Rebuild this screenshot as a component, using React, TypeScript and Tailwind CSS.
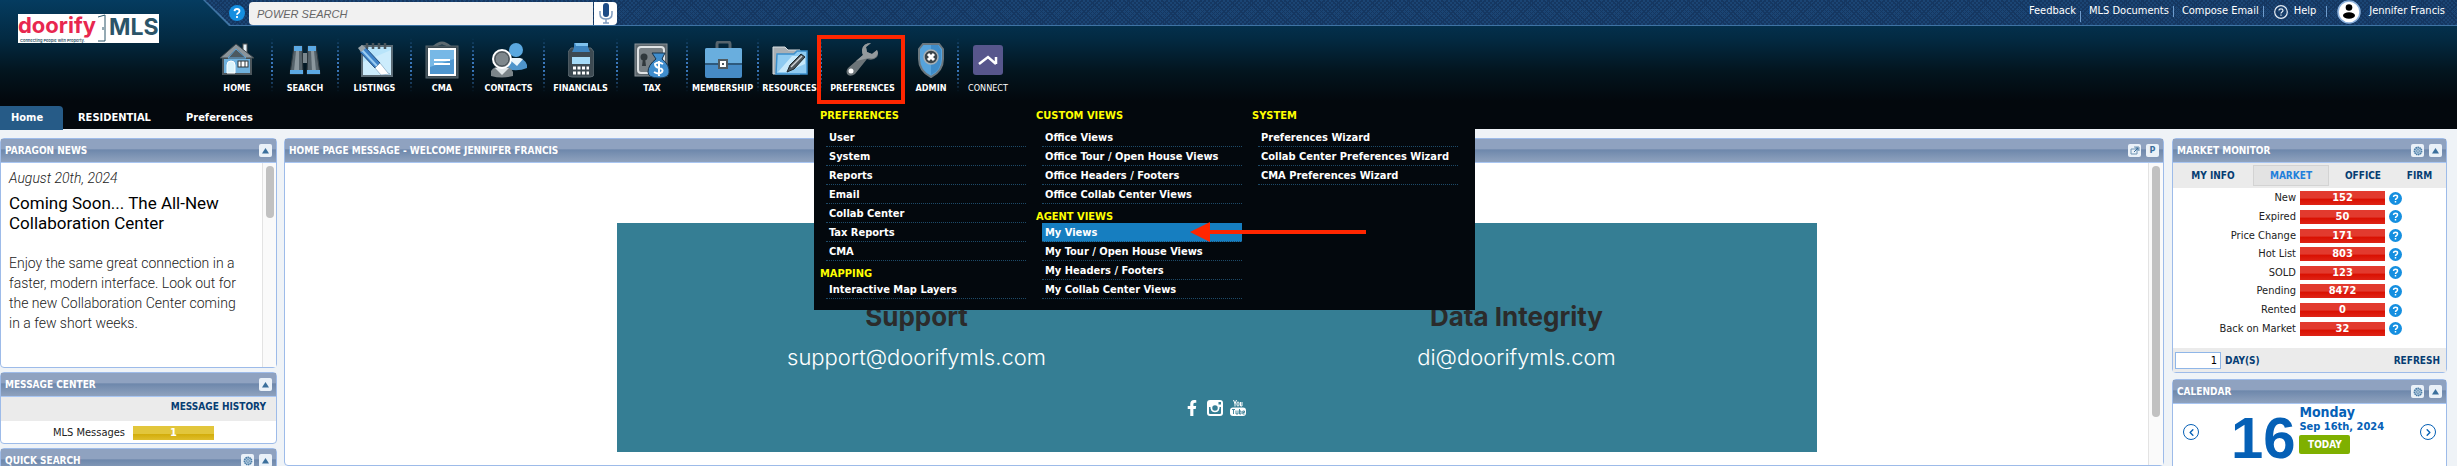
import React, { useState } from 'react';
import { ChevronLeft, ChevronRight } from 'lucide-react';
import { FaFacebookF } from 'react-icons/fa';

const HomeIcon = () => (
  <svg width="36" height="36" viewBox="0 0 36 36">
    <rect x="24" y="2" width="4" height="9" fill="#e8f4fb" stroke="#555" />
    <path d="M4 16H32V32H4Z" fill="#6fb1dd" stroke="#4c565c" strokeWidth="2" />
    <path d="M1 16L17 2L35 16H27L17 7L9 16Z" fill="#8b959b" stroke="#3f484d" />
    <path d="M9 16L17 7L27 16Z" fill="#4c5960" stroke="#62a9dc" />
    <path d="M8 31V23a4 4 0 0 1 8 0V31Z" fill="#d9f3fc" stroke="#fff" />
    <rect x="19" y="19" width="10" height="6" fill="#fff" stroke="#2d3439" />
    <path d="M22 19V25M26 19V25" stroke="#2d3439" />
  </svg>
);

const SearchIcon = () => (
  <svg width="36" height="36" viewBox="0 0 36 36">
    <path d="M7 4H15L16 32H3Z" fill="#56636b" stroke="#2e383e" />
    <path d="M21 4H29L33 32H20Z" fill="#56636b" stroke="#2e383e" />
    <path d="M9 9H12V29H7Z" fill="#8b979e" />
    <path d="M24 9H27L29 29H25Z" fill="#8b979e" />
    <rect x="16" y="11" width="4" height="10" fill="#7b878e" />
    <path d="M7 4H15V9H7ZM21 4H29V9H21ZM3 28H16V32H3ZM20 28H33V32H20Z" fill="#5ba9e4" />
  </svg>
);

const ListingsIcon = () => (
  <svg width="36" height="36" viewBox="0 0 36 36">
    <rect x="5" y="4" width="30" height="30" fill="#b8e4fa" stroke="#5c6c76" strokeWidth="2" />
    <path d="M6 20L34 8V33H6Z" fill="#d8f2fd" opacity=".6" />
    <path d="M10 1V7M16 1V7M22 1V7M28 1V7" stroke="#4a555b" strokeWidth="2.5" />
    <path d="M3 10L8 5L23 21L18 26Z" fill="#3e83c8" stroke="#224a78" />
    <path d="M5 8L20 24" stroke="#9bcdf2" strokeWidth="2" />
    <path d="M1 6L5 3L9 6L4 10Z" fill="#99a3a8" />
    <path d="M18 26L23 21L31 31L33 32L24 33Z" fill="#fff" stroke="#5c87a8" strokeWidth=".5" />
  </svg>
);

const CmaIcon = () => (
  <svg width="36" height="38" viewBox="0 0 36 38">
    <path d="M10 6Q18 -2 26 6" fill="none" stroke="#5d6a71" strokeWidth="3" />
    <rect x="2" y="5" width="32" height="32" fill="#3c4a52" stroke="#56646c" />
    <rect x="5" y="8" width="26" height="26" fill="#4f96cf" stroke="#fff" strokeWidth="2" />
    <path d="M6 9H30V18L6 26Z" fill="#77b8e6" />
    <path d="M10 19H26M10 23H26" stroke="#fff" strokeWidth="2" />
  </svg>
);

const ContactsIcon = () => (
  <svg width="38" height="38" viewBox="0 0 38 38">
    <circle cx="26" cy="9" r="7" fill="#5aa8e0" />
    <path d="M16 28V22Q18 17 26 17Q35 17 37 24V27Q28 31 16 28Z" fill="#4e94cb" />
    <path d="M20 19L27 25L33 18L30 17H22Z" fill="#eaf5fc" />
    <path d="M1 35V30Q4 25 12 25Q21 25 23 31V35Q12 38 1 35Z" fill="#7c858a" />
    <path d="M5 27L12 34L19 27Z" fill="#dfe5e8" />
    <circle cx="12" cy="18" r="9" fill="#6c767c" stroke="#fff" strokeWidth="2" />
    <circle cx="12" cy="18" r="7" fill="#7e878c" stroke="#444d52" />
  </svg>
);

const FinancialsIcon = () => (
  <svg width="26" height="36" viewBox="0 0 26 36">
    <path d="M3 6H23L26 10V32Q26 35 22 35H4Q0 35 0 32V10Z" fill="#3d4a52" stroke="#5b6870" />
    <path d="M6 1H20V5L22 10H4L6 6Z" fill="#3e85bf" />
    <path d="M7 1H20V4H8Z" fill="#7ec2ee" />
    <rect x="4" y="15" width="18" height="7" fill="#a5dbf8" />
    <path d="M5 26H21M5 31H21" stroke="#fff" strokeWidth="3" strokeDasharray="3 1.5" />
  </svg>
);

const TaxIcon = () => (
  <svg width="36" height="38" viewBox="0 0 36 38">
    <rect x="1" y="3" width="32" height="32" fill="#5c666c" stroke="#899298" />
    <rect x="4" y="6" width="26" height="26" rx="3" fill="#777f84" stroke="#dfe3e5" strokeWidth="2" />
    <circle cx="10" cy="16" r="3.5" fill="#30383c" />
    <path d="M9 17H11L12 25H8Z" fill="#30383c" />
    <path d="M18 12H31L28 18Q36 24 35 32Q34 37 25 37Q14 37 14 31Q14 24 22 18Z" fill="#3f8dcd" stroke="#16324a" />
    <path d="M29 23Q24 20 21 23Q21 26 25 27Q30 28 28 31Q25 34 20 31M25 20V35" fill="none" stroke="#fff" strokeWidth="2" />
  </svg>
);

const MembershipIcon = () => (
  <svg width="38" height="38" viewBox="0 0 38 38">
    <path d="M13 8V3Q13 1 15 1H24Q26 1 26 3V8" fill="none" stroke="#56646d" strokeWidth="3" />
    <rect x="1" y="7" width="37" height="30" rx="2" fill="#468bc6" />
    <path d="M1 9Q1 7 3 7H36Q38 7 38 9V23H1Z" fill="#69aede" />
    <path d="M1 23H38" stroke="#2d597d" strokeWidth="2" />
    <rect x="15" y="19" width="8" height="8" fill="#fff" stroke="#4f5a61" strokeWidth="2" />
    <rect x="18" y="22" width="2" height="2" fill="#4f5a61" />
  </svg>
);

const ResourcesIcon = () => (
  <svg width="36" height="32" viewBox="0 0 36 32">
    <path d="M1 3H13L16 6H28V30H1Z" fill="#a9b0b5" stroke="#dadfe2" />
    <path d="M5 10H22L25 7H35V30H4Z" fill="#8fcbf1" stroke="#3b8fcb" strokeWidth="1.5" />
    <path d="M6 28L20 12H33V20L14 28Z" fill="#c7e9fb" />
    <path d="M15 28L18 21L29 10L33 13L22 25Z" fill="#4c555a" stroke="#1f2629" />
    <path d="M19 23L30 12" stroke="#cfd4d7" strokeWidth="1.5" />
  </svg>
);

const WrenchIcon = () => (
  <svg width="36" height="34" viewBox="0 0 36 34">
    <path
      d="M32 7L27 11L22 9L21 4L26 0Q18 0 17 7Q17 10 18 12L3 25Q0 29 3 32Q6 34 10 31L22 16Q28 18 32 14Q34 11 32 7Z"
      fill="#6c7478"
    />
    <path d="M26 0Q18 0 17 7Q17 10 18 12L11 18L24 15Q31 17 33 10L32 7L27 11L22 9L21 4Z" fill="#949a9d" />
    <circle cx="6" cy="28" r="2.5" fill="#fff" />
  </svg>
);

const AdminIcon = () => (
  <svg width="26" height="36" viewBox="0 0 26 36">
    <path d="M5 2H21L25 7V17Q25 29 13 35Q1 29 1 17V7Z" fill="#56a3dc" stroke="#6b777e" strokeWidth="2" />
    <path d="M13 3H20L23 8V17Q23 28 13 33Z" fill="#3f8cc9" />
    <circle cx="13" cy="15" r="7" fill="#3a444a" stroke="#a7b0b5" strokeWidth="1.5" />
    <path d="M10 12L16 18M16 12L10 18" stroke="#fff" strokeWidth="3" />
  </svg>
);

const ConnectIcon = () => (
  <svg width="30" height="30" viewBox="0 0 30 30">
    <rect width="30" height="30" rx="3" fill="#57568c" />
    <path d="M6 19L15 12L23 19M23 19V12" fill="none" stroke="#fff" strokeWidth="2.5" />
  </svg>
);

const navItems = [
  { label: 'HOME', width: 'w-[70px]', icon: <HomeIcon /> },
  { label: 'SEARCH', width: 'w-[66px]', icon: <SearchIcon /> },
  { label: 'LISTINGS', width: 'w-[73px]', icon: <ListingsIcon /> },
  { label: 'CMA', width: 'w-[62px]', icon: <CmaIcon /> },
  { label: 'CONTACTS', width: 'w-[71px]', icon: <ContactsIcon /> },
  { label: 'FINANCIALS', width: 'w-[73px]', icon: <FinancialsIcon /> },
  { label: 'TAX', width: 'w-[70px]', icon: <TaxIcon /> },
  { label: 'MEMBERSHIP', width: 'w-[71px]', icon: <MembershipIcon /> },
  { label: 'RESOURCES', width: 'w-[63px]', icon: <ResourcesIcon /> },
  { label: 'PREFERENCES', width: 'w-[83px]', icon: <WrenchIcon /> },
  { label: 'ADMIN', width: 'w-[54px]', icon: <AdminIcon /> },
  { label: 'CONNECT', width: 'w-[58px]', icon: <ConnectIcon /> },
];

const menuColumns = [
  [
    { title: 'PREFERENCES', items: ['User', 'System', 'Reports', 'Email', 'Collab Center', 'Tax Reports', 'CMA'] },
    { title: 'MAPPING', items: ['Interactive Map Layers'] },
  ],
  [
    {
      title: 'CUSTOM VIEWS',
      items: ['Office Views', 'Office Tour / Open House Views', 'Office Headers / Footers', 'Office Collab Center Views'],
    },
    { title: 'AGENT VIEWS', items: ['My Views', 'My Tour / Open House Views', 'My Headers / Footers', 'My Collab Center Views'] },
  ],
  [{ title: 'SYSTEM', items: ['Preferences Wizard', 'Collab Center Preferences Wizard', 'CMA Preferences Wizard'] }],
];

const marketRows = [
  ['New', '152'],
  ['Expired', '50'],
  ['Price Change', '171'],
  ['Hot List', '803'],
  ['SOLD', '123'],
  ['Pending', '8472'],
  ['Rented', '0'],
  ['Back on Market', '32'],
];

const Logo = () => (
  <svg width="141" height="29" viewBox="0 0 141 29" className="bg-white">
    <text x="0" y="19" fill="#e8274f" fontFamily="Inter" fontWeight="700" fontSize="22">doorify</text>
    <path d="M80 3L87 1V27H80M85 13V16" fill="none" stroke="#2b5468" />
    <text x="91" y="21" fill="#2b5468" fontFamily="Inter" fontWeight="700" fontSize="23">MLS</text>
    <text x="2" y="28" fill="#2b5468" fontFamily="Inter" fontWeight="600" fontSize="4">Connecting People with Property.</text>
  </svg>
);

const HelpDot = ({ big }: { big?: boolean }) => (
  <svg width={big ? 16 : 13} height={big ? 16 : 13} viewBox="0 0 16 16">
    <circle cx="8" cy="8" r="8" fill="#158fe0" />
    <path d="M5.5 6.2Q5.7 4 8 4Q10.5 4 10.5 6Q10.5 7.200 9.200 8Q8 8.700 8 9.800M8 11V13" fill="none" stroke="#fff" strokeWidth="1.8" />
  </svg>
);

const PreferencesMenu = () => (
  <div className="absolute -left-2 top-full z-20 flex h-[206px] w-[661px] bg-[#03080d] pl-[6px] pt-0.5 text-left text-[11px] font-bold text-white">
    {menuColumns.map((column, c) => (
      <div key={c} className="w-[216px]">
        {column.map((group, g) => (
          <div key={group.title}>
            <h3 className={g === 0 ? 'h-[22px] leading-5 text-[#ffff00]' : 'h-[19px] pt-[7px] leading-3 text-[#ffff00]'}>
              {group.title}
            </h3>
            <ul className="ml-[6px] w-[200px]">
              {group.items.map((item) => (
                <li
                  key={item}
                  className={`h-[19px] border-b border-dotted border-[#1d4a68] ${item === 'My Views' ? 'bg-[#167ec0]' : ''}`}
                >
                  <a href="#" className="block pl-[3px] leading-[19px]">{item}</a>
                </li>
              ))}
            </ul>
          </div>
        ))}
      </div>
    ))}
    {/* Pointer to the active entry */}
    <svg width="176" height="20" viewBox="0 0 176 20" className="absolute left-[376px] top-[118px]">
      <path d="M0 10L20 0V8H176V12H20V20Z" fill="#ff2600" />
    </svg>
  </div>
);

const NavBar = () => (
  <nav className="pt-[9px]">
    <ul className="flex">
      {navItems.map((item, i) => (
        <li key={item.label} className={`relative flex h-[69px] shrink-0 ${item.width}`}>
          <a href="#" className="flex min-w-0 flex-1 flex-col items-center pt-[5px] text-[9px] text-white">
            <span className="flex h-[40px] items-center justify-center">{item.icon}</span>
            <span className={`leading-4 ${item.label === 'CONNECT' ? '' : 'font-bold'}`}>{item.label}</span>
          </a>
          {i < navItems.length - 1 && (
            <span className="mt-[3px] h-[54px] w-0.5 bg-[repeating-linear-gradient(to_bottom,#3a78bd_0_2px,transparent_2px_4px)] [mask-image:linear-gradient(transparent,black_40%,black_60%,transparent)]" />
          )}
          {item.label === 'PREFERENCES' && (
            <>
              <span className="absolute -left-[5px] right-0 inset-y-0 z-30 border-4 border-[#ff2600]" />
              <PreferencesMenu />
            </>
          )}
        </li>
      ))}
    </ul>
  </nav>
);

const TopBar = () => (
  <div className="bg-[#3f74a4] pb-px [clip-path:polygon(0_0,100%_0,100%_100%,26px_100%)]">
    <div className="flex h-[25px] items-center bg-[#1b4574] bg-[repeating-linear-gradient(45deg,transparent_0_2px,#153761_2px_3px),repeating-linear-gradient(-45deg,transparent_0_2px,#153761_2px_3px)] pl-[26px] text-[11px] text-white [clip-path:polygon(2px_0,100%_0,100%_100%,28px_100%)]">
      <button type="button" aria-label="Search help"><HelpDot big /></button>
      <input
        type="text"
        aria-label="Power search"
        placeholder="POWER SEARCH"
        className="ml-1 mt-0.5 h-[23px] w-[344px] rounded-l-sm bg-[#f1f1f1] px-2 font-['Liberation_Sans'] text-[11px] italic text-black placeholder-[#666] outline-none"
      />
      <button type="button" aria-label="Voice search" className="ml-px mt-0.5 flex h-[23px] w-[23px] items-center justify-center rounded-r-sm bg-white">
        <svg width="14" height="21" viewBox="0 0 14 21">
          <rect x="4" y="0" width="6" height="14" rx="3" fill="#1d4b86" />
          <path d="M1 8V11Q1 16 7 16Q13 16 13 11V8M7 16V20M4 20H10" fill="none" stroke="#7f9cc0" strokeWidth="1.5" />
        </svg>
      </button>
      <div className="ml-auto flex items-center pr-3 pb-0.5">
        <a href="#">Feedback</a>
        <span className="ml-1 mr-2 mt-2.5 h-[11px] w-px bg-[#6f9ccc]" />
        <a href="#">MLS Documents</a>
        <span className="ml-1 mr-2 h-[11px] w-px bg-[#6f9ccc]" />
        <a href="#">Compose Email</a>
        <span className="ml-1 mr-2.5 h-[11px] w-px bg-[#6f9ccc]" />
        <svg width="14" height="14" viewBox="0 0 14 14">
          <circle cx="7" cy="7" r="6.300" fill="none" stroke="#e5edf5" strokeWidth="1.2" />
          <path d="M5 5.500Q5 3.800 7 3.800Q9 3.800 9 5.400Q9 6.300 8 6.900Q7 7.500 7 8.400M7 9.500V10.700" fill="none" stroke="#e5edf5" strokeWidth="1.2" />
        </svg>
        <a href="#" className="ml-1.5">Help</a>
        <span className="mx-2.5 h-[11px] w-px bg-[#6f9ccc]" />
        <svg width="24" height="24" viewBox="0 0 24 24">
          <circle cx="12" cy="12" r="11" fill="#fff" stroke="#8db2dd" strokeWidth="1.5" />
          <circle cx="12" cy="7.500" r="3.300" fill="#000" />
          <ellipse cx="12" cy="15.500" rx="6" ry="3.300" fill="#000" />
        </svg>
        <a href="#" className="ml-2">Jennifer Francis</a>
      </div>
    </div>
  </div>
);

const Tabs = () => (
  <div className="mt-0.5 flex h-6 text-[11px] font-bold leading-6 text-white">
    <a href="#" className="w-[63px] rounded-tr bg-[#265b87] pl-[11px]">Home</a>
    <a href="#" className="ml-[15px] w-[108px]">RESIDENTIAL</a>
    <a href="#">Preferences</a>
  </div>
);

const iconButton = 'flex h-[13px] w-[13px] items-center justify-center rounded-xs bg-[#eaf1f8] text-[#3a6f9c]';

const ToolButton = ({ kind }: { kind: 'up' | 'gear' | 'window' | 'print' }) => (
  <button type="button" aria-label={kind} className={iconButton}>
    {kind === 'up' && (
      <svg width="7" height="6" viewBox="0 0 7 6"><path d="M0 5.500L3.500 0L7 5.500Z" fill="#3a6f9c" /></svg>
    )}
    {kind === 'gear' && (
      <svg width="10" height="10" viewBox="0 0 10 10">
        <circle cx="5" cy="5" r="3.600" fill="#a9c6dd" stroke="#4a7ba5" strokeWidth="1.600" strokeDasharray="1.500 .5" />
        <circle cx="5" cy="5" r="1.300" fill="#eaf1f8" stroke="#4a7ba5" strokeWidth=".8" />
      </svg>
    )}
    {kind === 'window' && (
      <svg width="10" height="9" viewBox="0 0 10 9">
        <path d="M1 3H7V8H1ZM4 1H9V5" fill="none" stroke="#6e93b2" />
        <path d="M4 6L8 2M5.500 2H8V4.500" fill="none" stroke="#3a6f9c" />
      </svg>
    )}
    {kind === 'print' && <span className="text-[9px] font-bold leading-none">P</span>}
  </button>
);

interface PanelProps {
  title: string;
  tools: ('up' | 'gear' | 'window' | 'print')[];
  className?: string;
  children?: React.ReactNode;
}

const Panel = ({ title, tools, className = '', children }: PanelProps) => (
  <section className={`flex flex-col rounded-sm border border-[#9dbbe9] bg-white ${className}`}>
    <header className="flex h-6 shrink-0 items-center gap-[5px] border-b border-[#a9c6f2] bg-[linear-gradient(#8fa2c0_0_45%,#6d87ab_46%,#8fa2be_100%)] pl-1 pr-1">
      <h2 className="mr-auto text-[10px] font-bold text-white">{title}</h2>
      {tools.map((tool) => <ToolButton key={tool} kind={tool} />)}
    </header>
    {children}
  </section>
);

const LeftColumn = () => (
  <aside className="flex w-[277px] shrink-0 flex-col gap-1">
    <Panel title="PARAGON NEWS" tools={['up']} className="h-[230px] shrink-0">
      <div className="flex min-h-0 flex-1">
        <div className="flex-1 pl-2 pt-[5px] font-['Roboto'] text-[14px] font-light text-[#222]">
          <p className="italic leading-5">August 20th, 2024</p>
          <h4 className="mt-[5px] text-[17px] font-normal leading-5 text-black">
            Coming Soon... The All-New<br />Collaboration Center
          </h4>
          <p className="mt-5 leading-[20px]">
            Enjoy the same great connection in a<br />
            faster, modern interface. Look out for<br />
            the new Collaboration Center coming<br />
            in a few short weeks.
          </p>
        </div>
        <div className="flex w-[14px] justify-center border-l border-[#e3e3e3] bg-[#fafafa] pt-[3px]">
          <div className="h-[52px] w-2 rounded-full bg-[#c1c1c1]" />
        </div>
      </div>
    </Panel>
    <Panel title="MESSAGE CENTER" tools={['up']} className="h-[72px] shrink-0">
      <div className="h-6 bg-[#ebebeb] pr-2.5 text-right text-[10px] font-bold leading-5 text-[#063d73]">
        <a href="#">MESSAGE HISTORY</a>
      </div>
      <div className="flex items-center gap-2 pt-1 text-[11px]">
        <span className="w-[124px] text-right text-[#222]">MLS Messages</span>
        <a href="#" className="h-[14px] w-[81px] bg-[linear-gradient(#e2c63c_0_55%,#d3ad0c_60%,#dfbe2c)] text-center font-bold leading-[14px] text-white">1</a>
      </div>
    </Panel>
    <Panel title="QUICK SEARCH" tools={['gear', 'up']} className="h-[72px] shrink-0" />
  </aside>
);

const HomeMessage = () => (
  <Panel title="HOME PAGE MESSAGE - WELCOME JENNIFER FRANCIS" tools={['window', 'print']} className="ml-[7px] mr-2 min-w-0 flex-1">
    <div className="flex min-h-0 flex-1">
      <div className="min-w-0 flex-1 pt-[60px]">
        <div className="mx-auto h-[229px] max-w-[1200px] bg-[#357e94] pt-[78px] font-['Inter']">
          <div className="grid grid-cols-2 text-center">
            <div>
              <h2 className="text-[26px] font-bold leading-8 text-[#2b2b2b]">Support</h2>
              <a href="#" className="mt-2 block text-[22px] font-light leading-8 text-white">support@doorifymls.com</a>
            </div>
            <div>
              <h2 className="text-[26px] font-bold leading-8 text-[#2b2b2b]">Data Integrity</h2>
              <a href="#" className="mt-2 block text-[22px] font-light leading-8 text-white">di@doorifymls.com</a>
            </div>
          </div>
          <div className="mt-[27px] flex justify-center gap-[7px] pr-1 text-white">
            <a href="#" aria-label="Facebook"><FaFacebookF size={16} /></a>
            <a href="#" aria-label="Instagram">
              <svg width="16" height="16" viewBox="0 0 16 16">
                <rect width="16" height="16" rx="3" fill="#fff" />
                <path d="M2 7V13Q2 14 3 14H13Q14 14 14 13V7H12.500Q12.500 12 8 12Q3.500 12 3.500 7Z" fill="#357e94" />
                <circle cx="8" cy="8" r="3.500" fill="#357e94" stroke="#fff" strokeWidth="1.500" />
                <rect x="11.500" y="2" width="2.500" height="2.500" fill="#357e94" />
              </svg>
            </a>
            <a href="#" aria-label="YouTube">
              <svg width="16" height="16" viewBox="0 0 16 16">
                <path d="M3.500 0L5 3.500L6.500 0M5 3V6.500M12 2V6H10.500V2" fill="none" stroke="#fff" />
                <rect x="7" y="2" width="2" height="4" rx="1" fill="none" stroke="#fff" />
                <rect y="7.500" width="16" height="8.500" rx="3" fill="#fff" />
                <path d="M2 9.500H5M3.500 9.500V14M6 10.500V14H8V10.500M9.500 9V14H11V11H9.500M14.500 14H12.800V11H14.500V12.500H13" fill="none" stroke="#357e94" strokeWidth=".9" />
              </svg>
            </a>
          </div>
        </div>
      </div>
      <div className="flex w-[15px] justify-center border-l border-[#e3e3e3] bg-[#fafafa] pt-[3px]">
        <div className="h-[251px] w-2 rounded-full bg-[#c1c1c1]" />
      </div>
    </div>
  </Panel>
);

const MarketMonitor = () => {
  const [days, setDays] = useState('1');

  return (
    <Panel title="MARKET MONITOR" tools={['gear', 'up']} className="shrink-0">
      <div className="flex h-[25px] items-center bg-[#ebebeb] pr-1 text-[10px] font-bold text-[#063d73]">
        <button type="button" className="w-20">MY INFO</button>
        <button type="button" className="h-[21px] w-[76px] border border-[#d3d3d3] bg-[#e3e3e3] text-[#1f7fdb]">MARKET</button>
        <button type="button" className="w-[68px]">OFFICE</button>
        <button type="button" className="flex-1">FIRM</button>
      </div>
      <table className="mt-px h-[149px] w-[230px] text-[11px] text-[#222]">
        <tbody>
          {marketRows.map(([label, count]) => (
            <tr key={label}>
              <td className="p-0 pr-1 text-right leading-[14px]">{label}</td>
              <td className="w-[85px] p-0">
                <a href="#" className="block h-[14px] bg-[linear-gradient(#e23a2e_0_52%,#d90f00_56%,#de2417)] text-center font-bold leading-[14px] text-white">{count}</a>
              </td>
              <td className="w-[18px] p-0 pl-1"><HelpDot /></td>
            </tr>
          ))}
        </tbody>
      </table>
      <div className="mt-[10px] flex h-6 items-center bg-[#ebebeb] pl-0.5 pr-1.5 text-[10px] font-bold text-[#063d73]">
        <input
          id="days"
          type="text"
          value={days}
          onChange={(e) => setDays(e.target.value)}
          className="mr-1 h-[17px] w-[46px] border border-[#8fb6e8] bg-white pr-[3px] text-right text-[11px] font-normal text-black"
        />
        <label htmlFor="days">DAY(S)</label>
        <button type="button" className="ml-auto">REFRESH</button>
      </div>
    </Panel>
  );
};

const Calendar = () => (
  <Panel title="CALENDAR" tools={['gear', 'up']} className="h-[140px] shrink-0">
    <div className="flex justify-between px-[10px] text-[#0560b6]">
      <button type="button" aria-label="Previous day" className="mt-5 flex size-4 items-center justify-center rounded-full border border-[#0560b6]">
        <ChevronLeft size={11} strokeWidth={3} />
      </button>
      <div className="flex gap-1 pr-1">
        <span className="pt-[5px] font-['Liberation_Sans'] text-[58px] font-bold leading-none">16</span>
        <div className="text-[11px] font-bold">
          <p className="text-[14px] leading-4">Monday</p>
          <p className="leading-[14px]">Sep 16th, 2024</p>
          <button type="button" className="mt-px h-[19px] w-[51px] rounded-xs bg-[#7fb000] text-[10px] text-white">TODAY</button>
        </div>
      </div>
      <button type="button" aria-label="Next day" className="mt-5 flex size-4 items-center justify-center rounded-full border border-[#0560b6]">
        <ChevronRight size={11} strokeWidth={3} />
      </button>
    </div>
  </Panel>
);

export default function App() {
  return (
    <div className="flex h-screen flex-col overflow-hidden bg-[#eff3f7] font-['DejaVu_Sans_Condensed','DejaVu_Sans',sans-serif]">
      <header className="h-[129px] shrink-0 bg-[linear-gradient(#053c60,#032a42_30%,#03151f_55%,#03080d_78%)]">
        <div className="flex">
          <div className="w-[203px] shrink-0 pl-[18px] pt-[14px]"><Logo /></div>
          <div className="min-w-0 flex-1">
            <TopBar />
            <NavBar />
          </div>
        </div>
        <Tabs />
      </header>
      <main className="flex min-h-0 flex-1 pr-[10px] pt-[9px]">
        <LeftColumn />
        <HomeMessage />
        <aside className="flex w-[275px] shrink-0 flex-col gap-1.5">
          <MarketMonitor />
          <Calendar />
        </aside>
      </main>
    </div>
  );
}
